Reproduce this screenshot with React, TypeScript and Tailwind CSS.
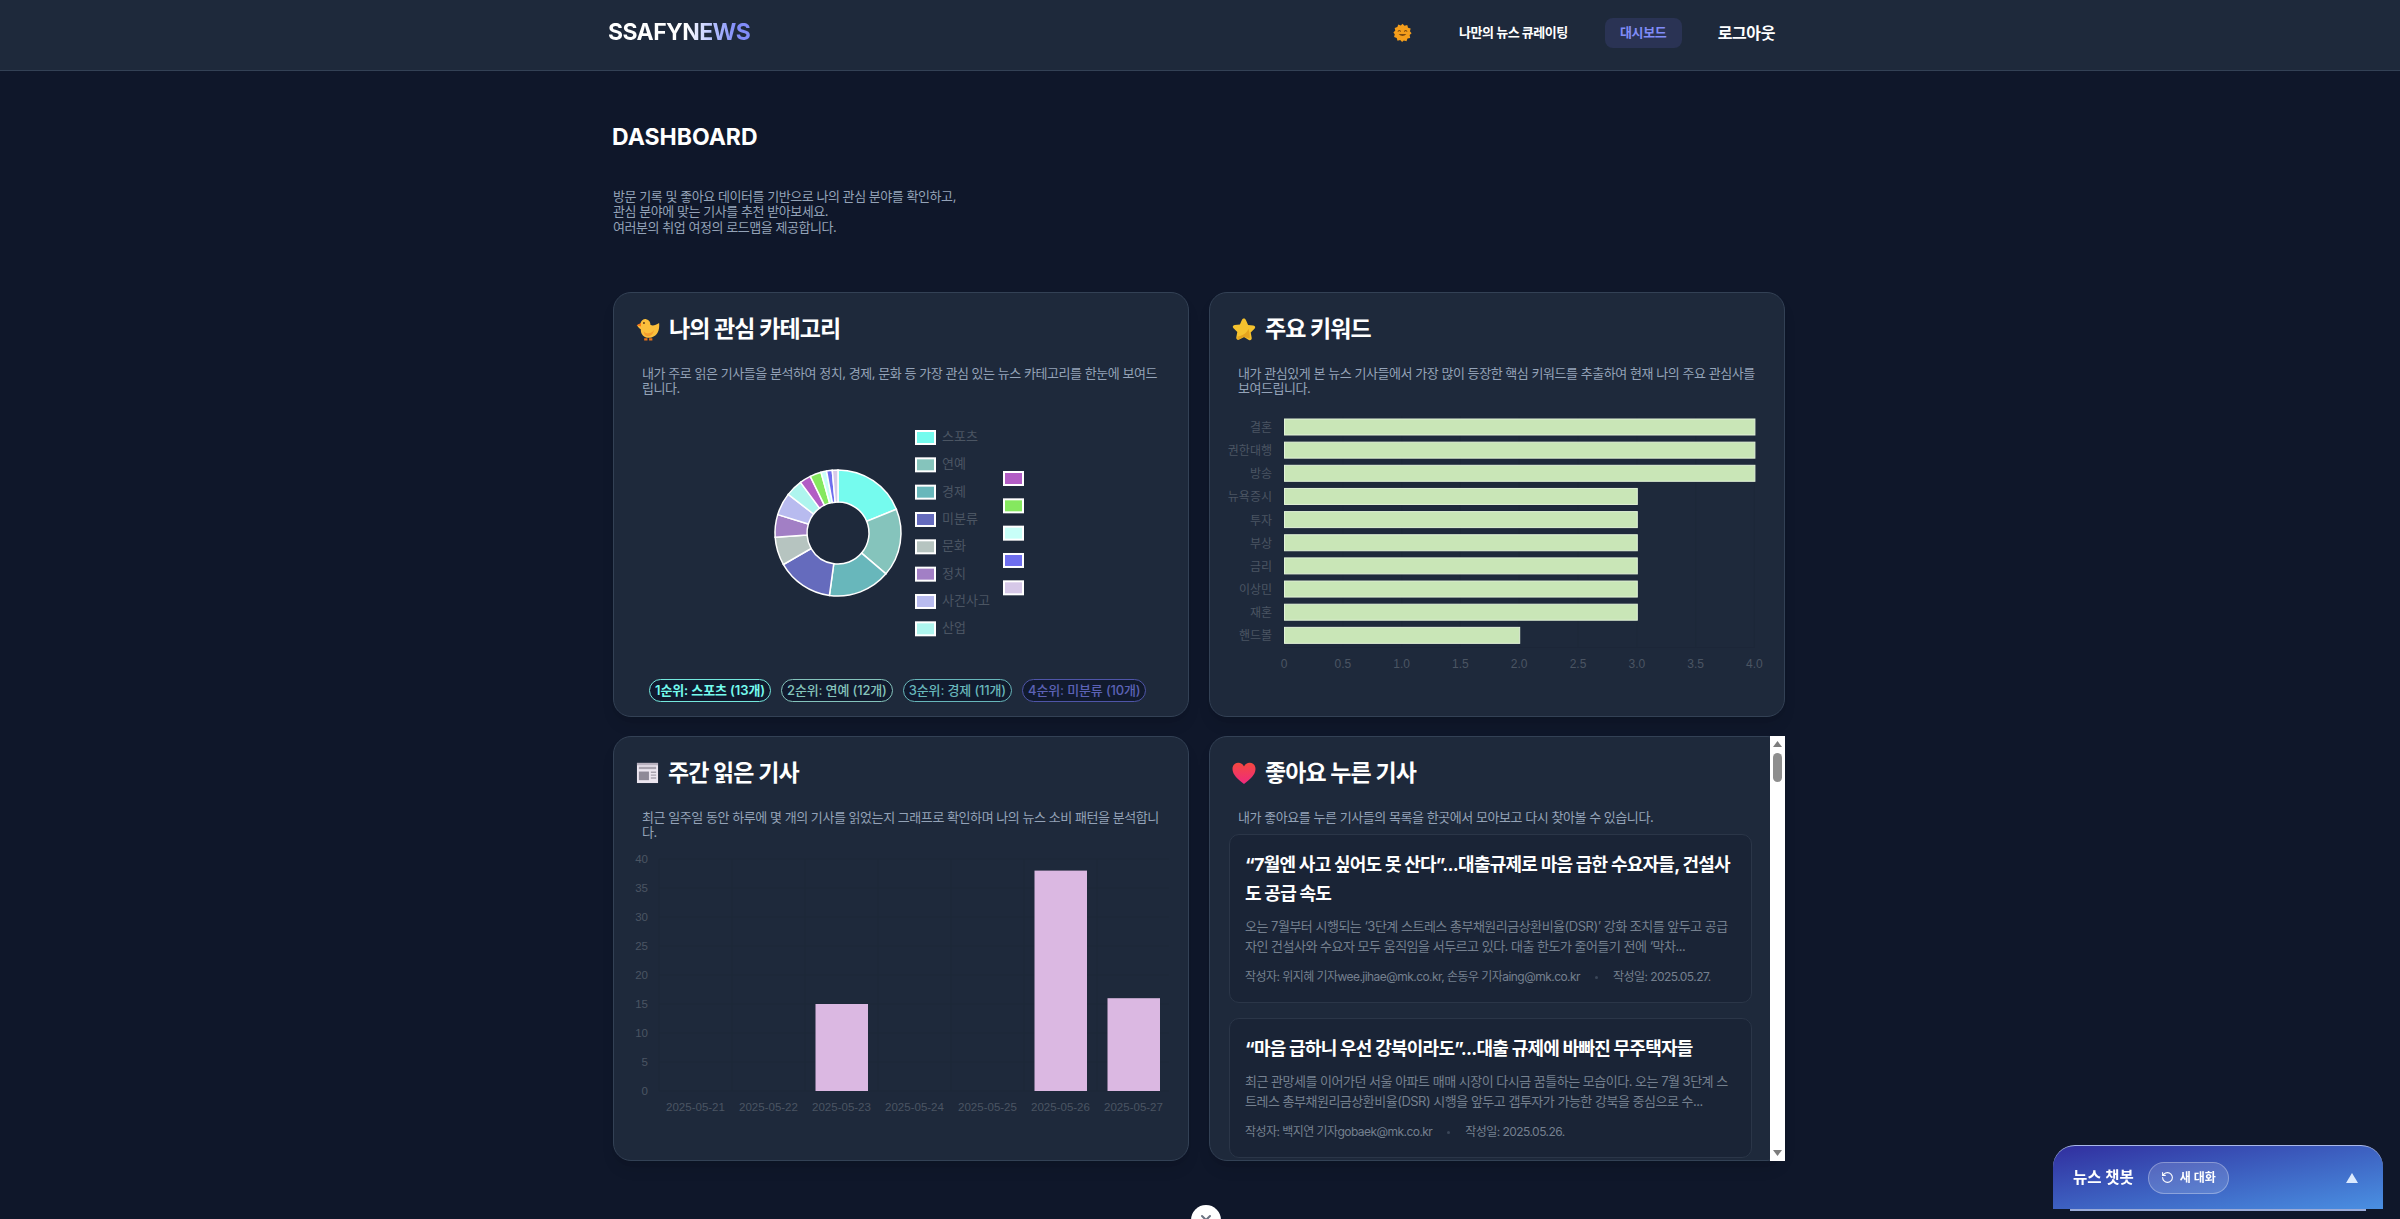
import type { ReactNode } from "react";
import { RotateCcw, X } from "lucide-react";

const slices = [
  { label: "스포츠", value: 13, color: "#75fbee" },
  { label: "연예", value: 12, color: "#85c4bc" },
  { label: "경제", value: 11, color: "#68b7bb" },
  { label: "미분류", value: 10, color: "#656bbd" },
  { label: "문화", value: 5, color: "#b6c4c0" },
  { label: "정치", value: 4, color: "#a27fc5" },
  { label: "사건사고", value: 4, color: "#b8bbef" },
  { label: "산업", value: 3, color: "#aef5ee" },
  { label: "", value: 2, color: "#b25dc5" },
  { label: "", value: 2, color: "#85e85f" },
  { label: "", value: 1, color: "#c8fff8" },
  { label: "", value: 1, color: "#6e6eee" },
  { label: "", value: 1, color: "#d6c8e8" },
];

const keywords = [
  ["결혼", 4],
  ["권한대행", 4],
  ["방송", 4],
  ["뉴욕증시", 3],
  ["투자", 3],
  ["부상", 3],
  ["금리", 3],
  ["이상민", 3],
  ["재혼", 3],
  ["핸드볼", 2],
] as const;

const weekly = [
  ["2025-05-21", 0],
  ["2025-05-22", 0],
  ["2025-05-23", 15],
  ["2025-05-24", 0],
  ["2025-05-25", 0],
  ["2025-05-26", 38],
  ["2025-05-27", 16],
] as const;

const articles = [
  {
    title: "“7월엔 사고 싶어도 못 산다”...대출규제로 마음 급한 수요자들, 건설사도 공급 속도",
    summary:
      "오는 7월부터 시행되는 ‘3단계 스트레스 총부채원리금상환비율(DSR)’ 강화 조치를 앞두고 공급자인 건설사와 수요자 모두 움직임을 서두르고 있다. 대출 한도가 줄어들기 전에 ‘막차...",
    author: "위지혜 기자wee.jihae@mk.co.kr, 손동우 기자aing@mk.co.kr",
    date: "2025.05.27.",
  },
  {
    title: "“마음 급하니 우선 강북이라도”...대출 규제에 바빠진 무주택자들",
    summary:
      "최근 관망세를 이어가던 서울 아파트 매매 시장이 다시금 꿈틀하는 모습이다. 오는 7월 3단계 스트레스 총부채원리금상환비율(DSR) 시행을 앞두고 갭투자가 가능한 강북을 중심으로 수...",
    author: "백지연 기자gobaek@mk.co.kr",
    date: "2025.05.26.",
  },
];

const chartText = "font-['Liberation_Sans','Noto_Sans_CJK_KR',sans-serif]";

function slicePath(start: number, end: number, r1: number, r0: number, cx: number, cy: number) {
  const pt = (a: number, r: number) => {
    const rad = ((a - 90) * Math.PI) / 180;
    return `${cx + r * Math.cos(rad)} ${cy + r * Math.sin(rad)}`;
  };
  const large = end - start > 180 ? 1 : 0;
  return `M${pt(start, r1)}A${r1} ${r1} 0 ${large} 1 ${pt(end, r1)}L${pt(end, r0)}A${r0} ${r0} 0 ${large} 0 ${pt(start, r0)}Z`;
}

function ChickIcon() {
  return (
    <svg width="24" height="24" viewBox="1 1 22 22">
      <path d="M2 8.500 5 7.200c.6-3 3-4.600 5.400-4.200 2.600.4 4 2.600 3.800 5.200 2.600 1.400 5-.1 8-1.700.6 6.500-1.400 11.700-7 13.200-5.400 1.400-10-1.500-9.800-7.500C3.800 11.300 2.800 10 2 8.500Z" fill="#fbbf3c" />
      <path d="M8 14c2.500 3 7 2.600 9.500-1-.4 3.600-3 6-6 5.700-2.200-.2-3.400-2.300-3.500-4.700Z" fill="#f59e2e" />
      <path d="M1.500 8.500 5.500 6.500 5.500 9.800Z" fill="#f97316" />
      <path d="M8.500 20.500h3v2h-3zM13 20.500h3v2h-3z" fill="#ea7317" />
      <circle cx="8.300" cy="6.500" r=".9" fill="#5b3a1a" />
    </svg>
  );
}

function StarIcon() {
  return (
    <svg width="24" height="24" viewBox="0 0 24 24">
      <path d="M12 1.500c.9 0 1.500.6 1.900 1.500l2.200 4.900 5.200.6c2 .3 2.500 2 1.200 3.300l-3.800 3.700 1 5.300c.3 1.900-1.200 3-2.900 2.100L12 20l-4.800 2.400c-1.700.9-3.200-.2-2.900-2.100l1-5.300L1.500 11.300C.2 10 .7 8.300 2.700 8l5.200-.6 2.200-4.900c.4-.4 1-1 1.900-1Z" fill="#f5c22e" />
      <path d="M5.500 19.500c4.500-.5 9-3 11-7.500 1 3.500 1.400 6.500 1.200 9.500l-5.700-1.500-6.500 3Z" fill="#e5a41e" />
    </svg>
  );
}

function NewsIcon() {
  return (
    <svg width="23" height="23" viewBox="0 0 24 24">
      <rect x="1" y="2" width="22" height="21" fill="#ece6f0" />
      <rect x="1" y="2" width="22" height="2.500" fill="#b9b2c0" />
      <rect x="3" y="6" width="18" height="2.500" fill="#a8a2ae" />
      <rect x="3" y="11" width="10.500" height="9" fill="#8f8a98" />
      <path d="M15.500 11H21v1.500h-5.500zM15.500 14H21v1.500h-5.500zM15.500 17H21v1.500h-5.500z" fill="#a8a2ae" />
    </svg>
  );
}

function HeartIcon() {
  return (
    <svg width="24" height="24" viewBox="0 0 24 24">
      <defs>
        <linearGradient id="heart" x1="0" y1="0" x2="0" y2="1">
          <stop offset="0" stopColor="#f4483f" />
          <stop offset="1" stopColor="#f02a7e" />
        </linearGradient>
      </defs>
      <path d="M12 23C6 18.500.5 13.800.5 8 .5 4.300 3 1.800 6.300 1.800c2.500 0 4.500 1.300 5.700 3.700 1.200-2.400 3.200-3.700 5.700-3.700 3.300 0 5.800 2.500 5.800 6.200 0 5.800-5.500 10.500-11.500 15Z" fill="url(#heart)" />
    </svg>
  );
}

function SunIcon() {
  return (
    <svg width="19" height="21" viewBox="0 0 24 24">
      <path d="M12 1l2.500 2.500L18 2.500l1 3.400 3.300 1.200-.9 3.400L23.500 13l-2.500 2.300.7 3.500-3.400.9-1.200 3.300-3.400-.9L11.500 24l-2.400-2.600-3.400.9-1-3.400-3.300-1.100.8-3.500L.5 12l2.400-2.400-.8-3.400 3.400-1L6.600 2l3.300 1Z" fill="#f59e1b" />
      <path d="M6.500 10.500q1.500-2 3 0M14.500 10.500q1.500-2 3 0" fill="none" stroke="#7c4a10" strokeWidth="1.300" strokeLinecap="round" />
      <path d="M7 14q5 5 10 0Z" fill="#7c4a10" />
    </svg>
  );
}

function Card({ icon, title, desc, children }: { icon: ReactNode; title: string; desc: string; children?: ReactNode }) {
  return (
    <>
      <div className="flex h-[30px] items-center gap-[9px] pl-[22px]">
        {icon}
        <h2 className="text-[23px] font-bold leading-[30px] tracking-[-0.9px] text-white">{title}</h2>
      </div>
      <p className="mt-[22px] px-[28px] text-[13px] leading-[15.3px] tracking-[-0.45px] text-[#94a3b8]">{desc}</p>
      {children}
    </>
  );
}

function CategoryCard() {
  const total = slices.reduce((s, d) => s + d.value, 0);
  let angle = 0;
  const paths = slices.map((d) => {
    const start = angle;
    angle += (d.value / total) * 360;
    return { d: slicePath(start, angle, 63, 31, 224, 137), color: d.color };
  });

  const legendA = slices.slice(0, 8);
  const legendB = slices.slice(8);

  return (
    <Card icon={<ChickIcon />} title="나의 관심 카테고리" desc="내가 주로 읽은 기사들을 분석하여 정치, 경제, 문화 등 가장 관심 있는 뉴스 카테고리를 한눈에 보여드립니다.">
      <svg width="574" height="275" className={`block ${chartText}`}>
        {paths.map((p) => (
          <path key={p.color} d={p.d} fill={p.color} stroke="#ffffff" strokeWidth="1.500" />
        ))}
        {legendA.map((d, i) => (
          <g key={d.label}>
            <rect x="302" y={35 + i * 27.33} width="19" height="13" fill={d.color} stroke="#ffffff" strokeWidth="2" />
            <text x="328" y={45 + i * 27.33} fontSize="13" fill="#4b5563">
              {d.label}
            </text>
          </g>
        ))}
        {legendB.map((d, i) => (
          <rect key={d.color} x="390" y={76 + i * 27.33} width="19" height="13" fill={d.color} stroke="#ffffff" strokeWidth="2" />
        ))}
      </svg>
      <div className="mt-[8px] flex gap-[10px] pl-[35px] text-[13px] tracking-[-0.15px]">
        <span className="flex h-[23px] items-center rounded-full border border-[#75e8dd] bg-[#111a2e] px-[5px] font-semibold tracking-[-0.1px] text-[#75fbee]">1순위: 스포츠 (13개)</span>
        <span className="flex h-[23px] items-center rounded-full border border-[#85c4bc] bg-[#111a2e] px-[5px] font-medium text-[#85c4bc]">2순위: 연예 (12개)</span>
        <span className="flex h-[23px] items-center rounded-full border border-[#68b7bb] bg-[#111a2e] px-[5px] font-medium text-[#68b7bb]">3순위: 경제 (11개)</span>
        <span className="flex h-[23px] items-center rounded-full border border-[#4f55a8] bg-[#111a2e] px-[5px] font-medium text-[#5c62b5]">4순위: 미분류 (10개)</span>
      </div>
    </Card>
  );
}

function KeywordCard() {
  // plot runs x 74..544 in svg space, 1 unit = 117.6px
  const ticks = ["0", "0.5", "1.0", "1.5", "2.0", "2.5", "3.0", "3.5", "4.0"];
  return (
    <Card icon={<StarIcon />} title="주요 키워드" desc="내가 관심있게 본 뉴스 기사들에서 가장 많이 등장한 핵심 키워드를 추출하여 현재 나의 주요 관심사를 보여드립니다.">
      <svg width="574" height="290" className={`block ${chartText}`}>
        {ticks.map((t, i) => (
          <g key={t}>
            <line x1={74 + i * 58.8} x2={74 + i * 58.8} y1="20" y2="251" stroke="#1d2839" />
            <text x={74 + i * 58.8} y="271.500" fontSize="12" textAnchor="middle" fill="#4b5563">
              {t}
            </text>
          </g>
        ))}
        <line x1="74" x2="545" y1="251.500" y2="251.500" stroke="#1c2638" />
        {keywords.map(([name, v], i) => (
          <g key={name}>
            <text x="62" y={36 + i * 23.15} fontSize="12" textAnchor="end" fill="#4b5563">
              {name}
            </text>
            <rect x="74.500" y={23 + i * 23.15} width={v * 117.6} height="16" fill="#c9e6b7" stroke="#e2f2d8" />
          </g>
        ))}
      </svg>
    </Card>
  );
}

function WeeklyCard() {
  const ys = [0, 5, 10, 15, 20, 25, 30, 35, 40];
  return (
    <Card icon={<NewsIcon />} title="주간 읽은 기사" desc="최근 일주일 동안 하루에 몇 개의 기사를 읽었는지 그래프로 확인하며 나의 뉴스 소비 패턴을 분석합니다.">
      <svg width="574" height="290" className={`block ${chartText}`}>
        {ys.map((v) => (
          <g key={v}>
            <line x1="45" x2="555" y1={251 - v * 5.8} y2={251 - v * 5.8} stroke="#1d2839" />
            <text x="34" y={255 - v * 5.8} fontSize="11.500" textAnchor="end" fill="#4b5563">
              {v}
            </text>
          </g>
        ))}
        {weekly.map(([day, v], i) => (
          <g key={day}>
            <line x1={45 + i * 73} x2={45 + i * 73} y1="19" y2="251" stroke="#1d2839" />
            {v > 0 && <rect x={55.500 + i * 73} y={251 - v * 5.8} width="52.500" height={v * 5.8} fill="#dbb8e2" />}
            <text x={81.500 + i * 73} y="271" fontSize="11.500" textAnchor="middle" fill="#4b5563">
              {day}
            </text>
          </g>
        ))}
      </svg>
    </Card>
  );
}

function FakeScrollbar() {
  return (
    <div className="absolute -right-px -top-px -bottom-px flex w-[15px] flex-col items-center bg-white pt-[5px] pb-[5px]">
      <svg width="9" height="6" viewBox="0 0 9 6">
        <path d="M4.500 0 9 6H0Z" fill="#7d7d7d" />
      </svg>
      <div className="mt-[6px] h-[29px] w-[9px] rounded-full bg-[#8e8e8e]" />
      <svg width="9" height="6" viewBox="0 0 9 6" className="mt-auto">
        <path d="M4.500 6 9 0H0Z" fill="#7d7d7d" />
      </svg>
    </div>
  );
}

function LikedCard() {
  return (
    <>
      <div className="h-full overflow-hidden rounded-[18px] pt-[21px]">
        <Card icon={<HeartIcon />} title="좋아요 누른 기사" desc="내가 좋아요를 누른 기사들의 목록을 한곳에서 모아보고 다시 찾아볼 수 있습니다." />
        <div className="mt-[9px] flex flex-col gap-[15px] pl-[19px] pr-[32px]">
          {articles.map((a) => (
            <article key={a.date} className="rounded-[10px] border border-[#2b3648] bg-[#1a2436] p-[15px]">
              <h3 className="text-[18px] font-bold leading-[29px] tracking-[-0.75px] text-white">{a.title}</h3>
              <p className="mt-[8px] text-[13px] leading-[20px] tracking-[-0.5px] text-[#75808f]">{a.summary}</p>
              <div className="mt-[11px] flex items-center text-[12px] leading-[20px] tracking-[-0.55px] text-[#75808f]">
                <span>작성자: {a.author}</span>
                <span className="mx-[15px] h-[3px] w-[3px] rounded-full bg-[#3b4658]" />
                <span>작성일: {a.date}</span>
              </div>
            </article>
          ))}
        </div>
      </div>
      <FakeScrollbar />
    </>
  );
}

export default function App() {
  return (
    <div className="relative h-screen overflow-hidden bg-[#0f172a] font-['Inter','Noto_Sans_CJK_KR',sans-serif]">
      <header className="h-[71px] border-b border-[#334155] bg-[#1e293b]">
        <div className="ml-[608px] flex h-[65px] w-[1167px] items-center">
          <span className="bg-gradient-to-r from-white from-55% to-[#818cf8] to-90% bg-clip-text text-[23px] font-bold tracking-[-0.6px] text-transparent">SSAFYNEWS</span>
          <div className="ml-auto flex items-center">
            <SunIcon />
            <span className="ml-[47px] text-[13px] font-semibold tracking-[-0.5px] text-white">나만의 뉴스 큐레이팅</span>
            <span className="ml-[37px] flex h-[30px] w-[77px] items-center justify-center rounded-lg bg-[#2a3354] text-[13px] font-semibold tracking-[-0.3px] text-[#818cf8]">대시보드</span>
            <span className="ml-[36px] text-[16px] font-semibold tracking-[-0.4px] text-white">로그아웃</span>
          </div>
        </div>
      </header>

      <main className="ml-[613px] w-[1172px] pt-[50px]">
        <h1 className="-ml-px text-[23px] font-bold leading-[32px] text-white">DASHBOARD</h1>
        <p className="mt-[36px] text-[13px] leading-[15.3px] tracking-[-0.45px] text-[#94a3b8]">
          방문 기록 및 좋아요 데이터를 기반으로 나의 관심 분야를 확인하고,
          <br />
          관심 분야에 맞는 기사를 추천 받아보세요.
          <br />
          여러분의 취업 여정의 로드맵을 제공합니다.
        </p>

        <div className="mt-[57px] grid grid-cols-2 gap-x-[20px] gap-y-[19px]">
          <section className="h-[425px] rounded-[18px] border border-[#334155] bg-[#1e293b] pt-[21px] shadow-lg">
            <CategoryCard />
          </section>
          <section className="h-[425px] rounded-[18px] border border-[#334155] bg-[#1e293b] pt-[21px] shadow-lg">
            <KeywordCard />
          </section>
          <section className="h-[425px] rounded-[18px] border border-[#334155] bg-[#1e293b] pt-[21px] shadow-lg">
            <WeeklyCard />
          </section>
          <section className="relative h-[425px] rounded-[18px] border border-[#334155] bg-[#1e293b] shadow-lg">
            <LikedCard />
          </section>
        </div>
      </main>

      <button className="fixed left-[1191px] top-[1205px] flex h-[30px] w-[30px] items-center justify-center rounded-full bg-white text-[#6b7280]">
        <X size={16} strokeWidth={3} />
      </button>

      <div className="fixed bottom-[10px] right-[17px] h-[64px] w-[330px]">
        <div className="flex h-full items-center rounded-t-[22px] border-t border-[#a9b8e8] bg-gradient-to-br from-[#312e9f] to-[#4a90e2] pl-[20px] pr-[25px]">
          <span className="text-[15.500px] font-bold text-white">뉴스 챗봇</span>
          <span className="ml-[14px] flex h-[32px] w-[81px] items-center justify-center gap-[6px] rounded-full border border-white/30 bg-white/15 text-[12px] font-semibold text-white">
            <RotateCcw size={13} />새 대화
          </span>
          <svg width="12" height="10" viewBox="0 0 12 10" className="ml-auto">
            <path d="M6 0l6 10H0Z" fill="#dbeafe" />
          </svg>
        </div>
        <div className="mx-[17px] h-[2px] bg-[#9aaad8]" />
      </div>
    </div>
  );
}
